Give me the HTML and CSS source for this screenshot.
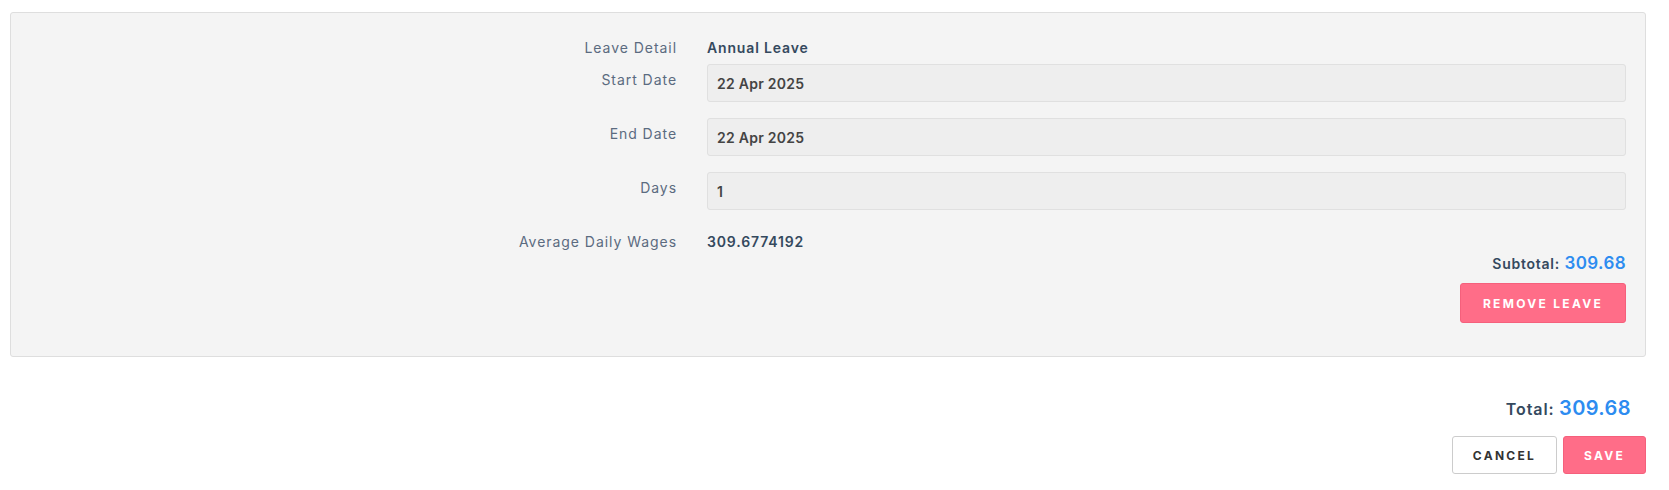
FILE: index.html
```html
<!DOCTYPE html>
<html>
<head>
<meta charset="utf-8">
<link rel="stylesheet" href="styles.css">
</head>
<body>
<div class="page">
  <div class="panel">
    <div class="form">
      <div class="row row-text first">
        <div class="label">Leave Detail</div>
        <div class="value">Annual Leave</div>
      </div>
      <div class="row row-input">
        <div class="label">Start Date</div>
        <div class="input">22 Apr 2025</div>
      </div>
      <div class="row row-input">
        <div class="label">End Date</div>
        <div class="input">22 Apr 2025</div>
      </div>
      <div class="row row-input last-input">
        <div class="label">Days</div>
        <div class="input">1</div>
      </div>
      <div class="row row-text">
        <div class="label">Average Daily Wages</div>
        <div class="value">309.6774192</div>
      </div>
    </div>
    <div class="subtotal"><span class="sum-label">Subtotal:</span> <span class="sum-num">309.68</span></div>
    <div class="panel-actions">
      <button class="btn btn-pink btn-remove">REMOVE LEAVE</button>
    </div>
  </div>
  <div class="total"><span class="total-label">Total:</span> <span class="total-num">309.68</span></div>
  <div class="actions">
    <button class="btn btn-outline">CANCEL</button>
    <button class="btn btn-pink btn-save">SAVE</button>
  </div>
</div>
</body>
</html>
```
FILE: styles.css
```css
html, body {
  margin: 0;
  padding: 0;
  background: #ffffff;
}
body {
  font-family: "Inter", "Noto Sans", sans-serif;
  color: #34495e;
}
.page {
  padding: 12px 23px 0 10px;
}
.panel {
  background: #f4f4f4;
  border: 1px solid #dedede;
  border-radius: 3px;
  padding: 25px 19px 33px 20px;
}
.form {
  display: flex;
  flex-direction: column;
}
.row {
  display: grid;
  grid-template-columns: 646px 1fr;
  column-gap: 30px;
}
.label {
  text-align: right;
  font-size: 14px;
  line-height: 20px;
  color: #5b6b80;
  letter-spacing: 0.95px;
}
.value {
  font-size: 14px;
  line-height: 20px;
  font-weight: 600;
  color: #34495e;
  letter-spacing: 0.85px;
}
.row-text.first {
  margin-bottom: 6px;
}
.row-input {
  margin-bottom: 16px;
}
.row-input .label {
  padding-top: 6px;
}
.row-input.last-input {
  margin-bottom: 22px;
}
.input {
  height: 36px;
  border: 1px solid #e0e0e0;
  border-radius: 3px;
  background: #eeeeee;
  box-sizing: content-box;
  padding: 0 9px;
  display: flex;
  align-items: center;
  font-size: 14px;
  font-weight: 600;
  color: #444444;
  letter-spacing: 0.25px;
}
.subtotal {
  text-align: right;
  line-height: 22px;
  height: 22px;
}
.sum-label {
  font-size: 14px;
  font-weight: 600;
  color: #34495e;
  letter-spacing: 0.75px;
}
.sum-num {
  font-size: 17px;
  font-weight: 600;
  color: #2d8cf0;
  letter-spacing: 0.4px;
}
.panel-actions {
  display: flex;
  justify-content: flex-end;
  margin-top: 9px;
}
.btn {
  font-family: "Inter", "Noto Sans", sans-serif;
  font-size: 12px;
  font-weight: 700;
  letter-spacing: 2.3px;
  border-radius: 3px;
  box-sizing: border-box;
  cursor: pointer;
  padding: 0;
}
.btn-pink {
  background: #ff6d88;
  border: 1px solid #f5607c;
  color: #ffffff;
}
.btn-remove {
  width: 166px;
  height: 40px;
}
.btn-outline {
  background: #ffffff;
  border: 1px solid #cccccc;
  color: #333333;
  width: 105px;
  height: 38px;
}
.btn-save {
  width: 83px;
  height: 38px;
}
.total {
  margin-top: 38px;
  text-align: right;
  padding-right: 15px;
  line-height: 26px;
  height: 26px;
}
.total-label {
  font-size: 16px;
  font-weight: 600;
  color: #34495e;
  letter-spacing: 0.9px;
}
.total-num {
  font-size: 20px;
  font-weight: 600;
  color: #2d8cf0;
  letter-spacing: 0.4px;
}
.actions {
  display: flex;
  justify-content: flex-end;
  gap: 6px;
  margin-top: 15px;
}
```
